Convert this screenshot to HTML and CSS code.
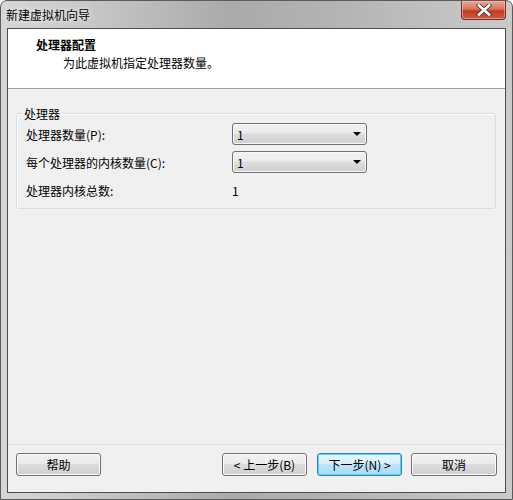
FILE: index.html
```html
<html>
<head>
<meta charset="utf-8" />
<link rel="stylesheet" href="styles.css">
</head>
<body>
<div class="window">
	<div class="titlebar">
		<span class="title">新建虚拟机向导</span>
		<div class="close">
			<svg width="16" height="12" viewBox="0 0 16 12">
				<path d="M3 1.5 L13 10.5 M13 1.5 L3 10.5" stroke="#5a3a34" stroke-width="4.4" stroke-linecap="square"/>
				<path d="M3 1.5 L13 10.5 M13 1.5 L3 10.5" stroke="#ffffff" stroke-width="2.6" stroke-linecap="square"/>
			</svg>
		</div>
	</div>
	<div class="client">
		<div class="header">
			<div class="h-title">处理器配置</div>
			<div class="h-sub">为此虚拟机指定处理器数量。</div>
		</div>
		<div class="body">
			<div class="group">
				<span class="legend">处理器</span>
				<div class="row">
					<span class="label">处理器数量(P):</span>
					<div class="combo"><span>1</span><i class="arrow"></i></div>
				</div>
				<div class="row">
					<span class="label">每个处理器的内核数量(C):</span>
					<div class="combo"><span>1</span><i class="arrow"></i></div>
				</div>
				<div class="row">
					<span class="label">处理器内核总数:</span>
					<span class="value">1</span>
				</div>
			</div>
		</div>
		<div class="footer">
			<button class="btn">帮助</button>
			<div class="spacer"></div>
			<button class="btn">&lt; 上一步(B)</button>
			<button class="btn focus">下一步(N) &gt;</button>
			<button class="btn cancel">取消</button>
		</div>
	</div>
</div>
</body>
</html>
```

FILE: styles.css
```css
body {margin:0; font-family:"Noto Sans CJK SC", "Liberation Sans", sans-serif; font-size:12px; color:#000;}
.window {width:513px; height:500px; box-sizing:border-box; border:1px solid #5b5b5b; border-radius:7px 7px 0 0;
	background:linear-gradient(90deg, #d6d6d6 0%, #c4c4c4 20%, #a9aaac 45%, #b2b3b5 65%, #cacaca 100%);
	display:flex; flex-direction:column; padding:0 6px 6px 6px;}
.titlebar {height:27px; display:flex; align-items:flex-start; justify-content:space-between;}
.title {margin:4px 0 0 -1px; font-size:12px; line-height:20px; color:#000; text-shadow:0 0 6px #e8e8e8, 0 0 4px #ececec;}
.close {width:45px; height:19px; box-sizing:border-box; border:1px solid #6e3026; border-top:none; border-radius:0 0 4px 4px;
	background:linear-gradient(#e8a898 0%, #d7745e 45%, #c2381e 55%, #cf5c40 100%);
	display:flex; align-items:center; justify-content:center; box-shadow:inset 0 0 0 1px rgba(255,200,190,0.5);}
.client {flex:1; border:1px solid #4d4d4d; background:#f0f0f0; display:flex; flex-direction:column;}
.header {height:59px; background:#fff; border-bottom:1px solid #a0a0a0;}
.h-title {font-weight:bold; margin:7px 0 0 28px; line-height:18px;}
.h-sub {margin:0 0 0 55px; line-height:18px;}
.body {flex:1; padding:24px 9px 0 8px;}
.group {position:relative; box-sizing:border-box; height:96px; border:1px solid #d5dfe5; border-radius:3px; padding:6px 0 0 9px;
	box-shadow:inset 1px 1px 0 #fff;}
.legend {position:absolute; left:6px; top:-9px; background:#f0f0f0; padding:0 2px 0 1px; line-height:17px;}
.row {display:flex; align-items:center; height:28px;}
.label {width:206px;}
.combo {width:135px; height:22px; box-sizing:border-box; border:1px solid #707070; border-radius:3px;
	background:linear-gradient(#f2f2f2 0%, #ebebeb 45%, #dddddd 50%, #cfcfcf 100%);
	display:flex; align-items:center; justify-content:space-between; padding:0 5px 0 4px; box-shadow:inset 0 0 0 1px #f8f8f8;}
.arrow {width:0; height:0; border-left:4px solid transparent; border-right:4px solid transparent; border-top:4px solid #000;}
.footer {height:39px; border-top:1px solid #dfdfdf; display:flex; align-items:flex-start; padding:8px 8px 0 8px;}
.spacer {flex:1;}
.btn {width:85px; height:23px; font:inherit; font-size:12px; color:#000; border:1px solid #707070; border-radius:3px;
	background:linear-gradient(#f2f2f2 0%, #ebebeb 45%, #dddddd 50%, #cfcfcf 100%);
	box-shadow:inset 0 0 0 1px #fcfcfc; padding:0; margin-left:10px;}
.btn:first-child {margin-left:0;}
.btn.focus {border-color:#3c7fb1; box-shadow:inset 0 0 0 1px #48d8fb; background:linear-gradient(#eaf6fd 0%, #d9f0fc 45%, #bee6fd 50%, #a7d9f5 100%);}
.btn.cancel {margin-left:9px; width:86px;}
```
